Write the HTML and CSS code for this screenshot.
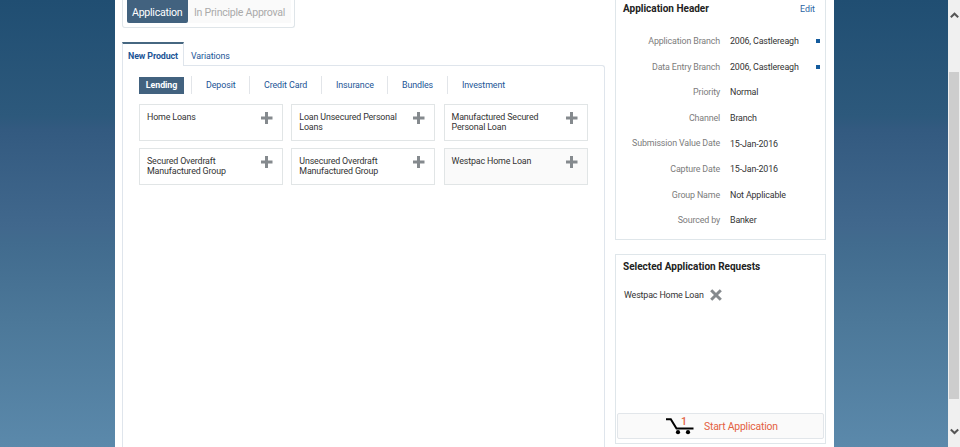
FILE: index.html
```html
<!DOCTYPE html>
<html lang="en">
<head>
<meta charset="utf-8">
<title>Application</title>
<link rel="stylesheet" href="styles.css">
</head>
<body>
<svg width="0" height="0" class="defs"><defs>
<symbol id="plus" viewBox="0 0 12 12"><path d="M5.5 0V12M0 6H11.5" stroke="#858a8e" stroke-width="3" fill="none"/></symbol>
</defs></svg>
<div class="window">
<div class="page">
  <main class="main">
    <div class="modes"><span class="mode active">Application</span><span class="mode">In Principle Approval</span></div>
    <nav class="tabs"><span class="tab active">New Product</span><span class="tab">Variations</span></nav>
    <section class="panel">
      <nav class="cats"><span class="cat on">Lending</span><span class="cat deposit">Deposit</span><span class="cat credit">Credit Card</span><span class="cat insurance">Insurance</span><span class="cat bundles">Bundles</span><span class="cat invest">Investment</span></nav>
      <div class="cards">
        <div class="card"><span>Home Loans</span><svg class="plus"><use href="#plus"/></svg></div>
        <div class="card"><span>Loan Unsecured Personal<br>Loans</span><svg class="plus"><use href="#plus"/></svg></div>
        <div class="card"><span>Manufactured Secured<br>Personal Loan</span><svg class="plus"><use href="#plus"/></svg></div>
        <div class="card"><span>Secured Overdraft<br>Manufactured Group</span><svg class="plus"><use href="#plus"/></svg></div>
        <div class="card"><span>Unsecured Overdraft<br>Manufactured Group</span><svg class="plus"><use href="#plus"/></svg></div>
        <div class="card picked"><span>Westpac Home Loan</span><svg class="plus"><use href="#plus"/></svg></div>
      </div>
    </section>
  </main>
  <aside class="side">
    <section class="box header">
      <div class="title-row"><h2>Application Header</h2><a class="edit">Edit</a></div>
      <dl class="fields">
        <dt>Application Branch</dt><dd>2006, Castlereagh<i class="mark"></i></dd>
        <dt>Data Entry Branch</dt><dd>2006, Castlereagh<i class="mark"></i></dd>
        <dt>Priority</dt><dd>Normal</dd>
        <dt>Channel</dt><dd>Branch</dd>
        <dt>Submission Value Date</dt><dd>15-Jan-2016</dd>
        <dt>Capture Date</dt><dd>15-Jan-2016</dd>
        <dt>Group Name</dt><dd>Not Applicable</dd>
        <dt>Sourced by</dt><dd>Banker</dd>
      </dl>
    </section>
    <section class="box requests">
      <h2>Selected Application Requests</h2>
      <div class="request"><span>Westpac Home Loan</span><svg class="remove" viewBox="0 0 12 12"><path d="M1.2 1.2L10.8 10.8M10.8 1.2L1.2 10.8" stroke="#858a8e" stroke-width="3" fill="none"/></svg></div>
      <div class="start"><span class="cart"><svg viewBox="0 0 28 17"><path d="M0 1.2H4.8L10.5 10.5H27.5" stroke="#000" stroke-width="2" fill="none"/><circle cx="12" cy="14.2" r="2.1"/><circle cx="22" cy="14.2" r="2.1"/></svg><b class="count">1</b></span><span class="start-label">Start Application</span></div>
    </section>
  </aside>
</div>
<div class="scroll">
  <svg class="arrow" viewBox="0 0 9 7"><path d="M0.8 5.2L4.5 1.7L8.2 5.2" stroke="#555" stroke-width="2" fill="none"/></svg>
  <div class="thumb"></div>
  <svg class="arrow" viewBox="0 0 9 7"><path d="M0.8 1.5L4.5 5L8.2 1.5" stroke="#555" stroke-width="2" fill="none"/></svg>
</div>
</div>
</body>
</html>
```
FILE: styles.css
```css
* { box-sizing: border-box; }
body { margin: 0; font: 8.9px/10px Roboto, "Liberation Sans", sans-serif; letter-spacing: -0.15px; color: #333; overflow: hidden; }
h2, dl, dd { margin: 0; }
.defs { position: absolute; }
.window { display: flex; height: 447px; padding-left: 115px; background: linear-gradient(#204e72 0%, #2d597c 26%, #335a80 29%, #41688d 51%, #416b8e 54%, #4c7899 72%, #5b89ab 100%); }
.page { display: flex; width: 718.5px; padding-left: 7px; background: #fff; }
.main { width: 482.5px; height: 447px; }
.modes { display: flex; width: 173px; height: 28px; padding: 0 3px 4px 4px; border: 1px solid #dfe5e9; border-top: 0; border-radius: 0 0 3px 3px; }
.mode { height: 23px; flex: 1; padding-left: 6px; font-size: 10.6px; line-height: 25px; letter-spacing: -0.26px; white-space: nowrap; color: #aaa; background: #fafafa; }
.mode.active { flex: 0 0 61px; padding-left: 5px; color: #fff; background: #42627f; border-radius: 0 0 2px 2px; }
.tabs { display: flex; height: 23px; margin-top: 14px; color: #1c5596; line-height: 25px; letter-spacing: -0.12px; }
.tab { padding: 2px 7px 0; }
.tab.active { position: relative; width: 62px; height: 24px; padding: 0 0 0 5px; line-height: 24px; font-weight: 700; white-space: nowrap; background: #fff; border: 1px solid #dfe5ec; border-top: 2px solid #466781; border-bottom: 0; }
.panel { height: 382px; padding: 10px 16px; border: 1px solid #dfe5ec; border-bottom: 0; border-top-right-radius: 3px; }
.cats { display: flex; height: 18px; line-height: 18px; letter-spacing: -0.1px; color: #1c5596; }
.cat { border-left: 1px solid #e2e5e9; padding-left: 14px; white-space: nowrap; }
.cat.on { width: 45px; height: 17px; margin: 1px 7px 0 0; padding: 0; border: 0; text-align: center; font-weight: 700; line-height: 17px; color: #fff; background: #42627f; }
.deposit { width: 58px; }
.credit { width: 72px; }
.insurance { width: 66px; }
.bundles { width: 60px; }
.cards { display: grid; grid-template-columns: repeat(3, 144px); grid-auto-rows: 37px; gap: 7px 8.3px; margin-top: 10px; }
.card { display: flex; justify-content: space-between; padding: 7px 9px 0 7px; border: 1px solid #e1e5e6; }
.card span { white-space: nowrap; }
.card.picked { background: #fafafa; }
.plus { flex: none; width: 12px; height: 12px; }
.side { width: 211px; margin-left: 10.5px; }
.box { border: 1px solid #dfe6ea; }
h2 { font-size: 10px; line-height: 12px; letter-spacing: 0; color: #222; white-space: nowrap; }
.header { height: 240px; padding: 3px 0 0 7px; border-top: 0; }
.title-row { display: flex; justify-content: space-between; padding-right: 10px; color: #2b65a2; line-height: 12px; letter-spacing: 0; }
.fields { display: grid; grid-template-columns: 97px 1fr; column-gap: 10px; grid-auto-rows: 25.6px; margin-top: 13px; line-height: 26px; }
dt { text-align: right; color: #7c7c7c; white-space: nowrap; }
dd { display: flex; justify-content: space-between; align-items: center; padding: 1px 5px 0 0; white-space: nowrap; }
.mark { width: 4px; height: 4px; background: #145b9d; }
.requests { display: flex; flex-direction: column; height: 190px; margin-top: 14px; padding: 6px 1px 4px 1px; }
.requests h2 { padding-left: 6px; }
.request { display: flex; align-items: center; gap: 6px; height: 12px; margin: 16px 0 0 7px; }
.request span { padding-bottom: 1px; }
.remove { width: 12px; height: 12px; }
.start { display: flex; align-items: center; gap: 9px; height: 26px; margin-top: auto; padding-left: 48px; font-size: 10.4px; line-height: 12px; letter-spacing: -0.2px; color: #e4603f; background: #fafafa; border: 1px solid #e2e6ea; border-radius: 2px; }
.start-label { padding: 2px 0 0 1px; }
.cart { position: relative; width: 28px; height: 17px; }
.cart svg { display: block; width: 28px; height: 17px; }
.count { position: absolute; left: 15px; top: -2px; font-size: 10.5px; font-weight: 500; }
.scroll { display: flex; flex-direction: column; align-items: center; width: 12px; height: 447px; margin-left: auto; padding: 12px 0; background: #f0f0f0; }
.thumb { width: 10px; height: 327px; margin: 53px 0 auto; background: #cdcdcd; }
.arrow { width: 9px; height: 7px; flex: none; }
```
